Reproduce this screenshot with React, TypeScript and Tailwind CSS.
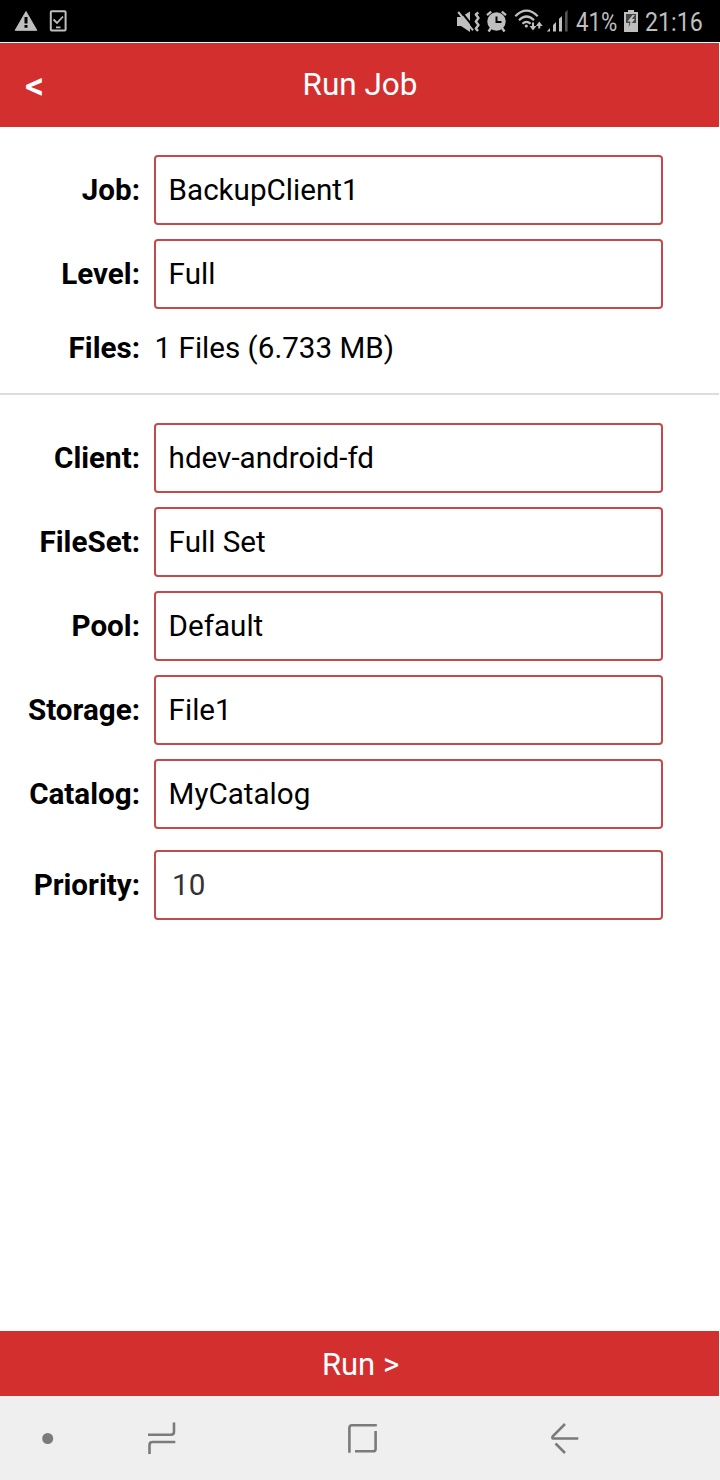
const FONT = "font-['Roboto','Liberation_Sans',sans-serif]";

function Row({ label, value, input = false }: { label: string; value: string; input?: boolean }) {
  return (
    <div className="flex h-[70px] items-center">
      <div className="w-[140px] text-right font-bold">{label}</div>
      <div
        className={
          input
            ? "ml-[14px] flex h-[70px] w-[509px] items-center rounded-[4px] border-2 border-[#c24a4a] pl-[16px] text-[#333333]"
            : "ml-[14px] flex h-[70px] w-[509px] items-center rounded-[4px] border-2 border-[#c24a4a] pl-[12.6px]"
        }
      >
        {value}
      </div>
    </div>
  );
}

function StatusBar() {
  return (
    <header className="flex h-[42px] shrink-0 items-center bg-black text-[25.5px] leading-none text-[#bfbfbf]">
      <svg className="h-[42px] w-[80px]" viewBox="0 0 80 42" fill="none">
        <path d="M26 11.5 L36.8 30.3 H15.2 Z" fill="#bfbfbf" stroke="#bfbfbf" strokeLinejoin="round" />
        <path d="M26 17 V23.5 M26 25 V27.8" stroke="#000" strokeWidth="3" />
        <rect x="50.8" y="11.3" width="14.8" height="19.2" rx="1" stroke="#bfbfbf" strokeWidth="2" />
        <path d="M53.5 19.5 L57 23 L63 16.5 M56 27.3 H60.5" stroke="#bfbfbf" strokeWidth="1.8" />
      </svg>
      <svg className="ml-[370px] h-[42px] w-[126px] shrink-0" viewBox="450 0 126 42" fill="none">
        <path d="M457 17 H461 L470 11.5 V32 L461 26 H457 Z" fill="#bfbfbf" />
        <path d="M460.2 10.5 L475 28.8" stroke="#000" strokeWidth="2" />
        <path d="M458.2 12 L473 30.3" stroke="#bfbfbf" strokeWidth="2" />
        <path d="M478.3 12.5 L475.8 14.5 L478.5 18 L475.8 21.5 L478.5 25 L475.8 28.5 L478 31" stroke="#bfbfbf" strokeWidth="2.4" strokeLinejoin="round" />
        <circle cx="496.5" cy="21.5" r="9.2" fill="#bfbfbf" />
        <path d="M487 15.2 L491.2 11.7 M501.8 11.7 L506 15.2 M491 28 L488.5 31.5 M502 28 L504.5 31.5" stroke="#bfbfbf" strokeWidth="2.4" />
        <path d="M496.5 16.5 V22 H501.5" stroke="#000" strokeWidth="2" />
        <path d="M515.3 16.2 Q526.5 5.2 537.7 16.2 M519 20.2 Q526.5 12.8 534 20.2 M522.4 23.8 Q526.5 19.8 530.6 23.8" stroke="#bfbfbf" strokeWidth="2.2" />
        <circle cx="526.3" cy="26" r="1.6" fill="#bfbfbf" />
        <path d="M533 22.5 V28 M539.3 28.5 V25" stroke="#bfbfbf" strokeWidth="2" />
        <path d="M529.6 26 H536.4 L533 30.6 Z M535.9 26 H542.7 L539.3 21.4 Z" fill="#bfbfbf" />
        <path d="M546.8 31.5 L550 28 V31.5 Z M553 25 L556 22 V31.5 H553 Z M559 18.8 L562 16 V31.5 H559 Z" fill="#bfbfbf" />
        <path d="M565 12.5 L567.6 10 V31.5 H565 Z" fill="#555" />
      </svg>
      <div className="w-[46px] shrink-0 whitespace-nowrap pt-[3px]">
        <span className="inline-block origin-left scale-x-[0.87]">41%</span>
      </div>
      <svg className="h-[42px] w-[20px] shrink-0" viewBox="622 0 20 42">
        <path d="M628 10 H634 V12 H638 V32 H624 V12 H628 Z" fill="#bfbfbf" />
        <path d="M626 14 H636 V23 H631.5 L628.5 27 L629.3 23 H626 Z" fill="#444" />
        <path d="M632.5 15 L627.5 21.5 H630.6 L629.5 26 L635 19 H632 L634.8 15 Z" fill="#bfbfbf" />
      </svg>
      <div className="ml-[3px] w-[60px] shrink-0 whitespace-nowrap pt-[3px]">
        <span className="inline-block origin-left scale-x-[0.91]">21:16</span>
      </div>
    </header>
  );
}

function NavBar() {
  return (
    <nav className="h-[84px] shrink-0 bg-[#efefef]">
      <svg className="h-[84px] w-[719px]" viewBox="0 0 719 84" fill="none" stroke="#7b7b7b" strokeWidth="2.6">
        <circle cx="47.7" cy="42.5" r="5.5" fill="#7b7b7b" stroke="none" />
        <path d="M148 38.8 H171 Q174 38.8 174 35.8 V26.5 M175.3 46 H152.5 Q149.5 46 149.5 49 V58" />
        <path d="M376.8 29.3 H352 Q349.4 29.3 349.4 32 V56.8 M355 55.3 H373 Q375.6 55.3 375.6 52.7 V35" />
        <path d="M578.3 42.5 H553.5 Q551.5 42.5 553 40 L565 28 M555.5 47.5 L565 57" />
      </svg>
    </nav>
  );
}

export default function App() {
  return (
    <div className={`flex h-[1480px] w-[720px] flex-col bg-white ${FONT}`}>
      <StatusBar />
      <div className="mt-px flex h-[84px] w-[719px] shrink-0 items-center bg-[#d32f2f] text-white">
        <div className="w-[100px] pl-[25px] pt-[2px] text-[38px] font-medium leading-[40px]">&lt;</div>
        <div className="flex-1 pl-px text-center text-[31.5px] leading-[48px]">Run Job</div>
        <div className="w-[100px]" />
      </div>
      <main className="flex flex-1 flex-col text-[29.6px] leading-[36px] text-black">
        <section className="flex flex-col gap-[14px] pt-[28px]">
          <Row label="Job:" value="BackupClient1" />
          <Row label="Level:" value="Full" />
        </section>
        <div className="mt-[21px] flex">
          <div className="w-[140px] text-right font-bold">Files:</div>
          <div className="ml-[14.6px]">1 Files (6.733 MB)</div>
        </div>
        <div className="mt-[27px] h-[2px] w-[719px] bg-[#dddddd]" />
        <section className="flex flex-col gap-[14px] pt-[28px]">
          <Row label="Client:" value="hdev-android-fd" />
          <Row label="FileSet:" value="Full Set" />
          <Row label="Pool:" value="Default" />
          <Row label="Storage:" value="File1" />
          <Row label="Catalog:" value="MyCatalog" />
        </section>
        <div className="mt-[21px]">
          <Row label="Priority:" value="10" input />
        </div>
      </main>
      <div className="flex h-[65px] w-[719px] shrink-0 items-center justify-center bg-[#d32f2f] pl-[2px] pt-[4px] text-[31px] text-white">
        Run &gt;
      </div>
      <NavBar />
    </div>
  );
}
